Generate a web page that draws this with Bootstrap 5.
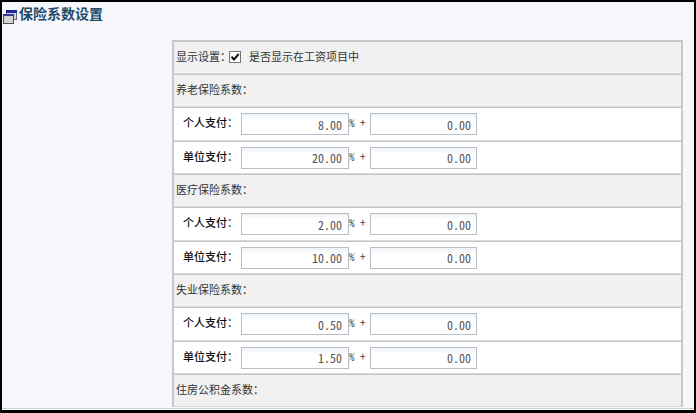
<!DOCTYPE html>
<html lang="zh-CN">
<head>
<meta charset="utf-8">
<meta name="viewport" content="width=device-width, initial-scale=1">
<title>保险系数设置</title>
<link href="https://cdn.jsdelivr.net/npm/bootstrap@5.3.0/dist/css/bootstrap.min.css" rel="stylesheet">
<style>
body { font: 11px/16px "Noto Sans CJK SC", sans-serif; color: #333; background: #fff; }
.frame { border: 2px solid #000; border-bottom-width: 3px; }
.panel { background: #f5f7fa; border-bottom: 1px solid #ccc; margin-bottom: 1px; padding-bottom: 1px; }
.page-title { font-size: 14px; line-height: 22px; font-weight: 700; color: #1f4a68; margin-bottom: 16px; }
.page-title svg { margin-top: 6px; }
.sheet { padding: 0 11px 0 170px; }
.coef { border: 1px solid #c6c8c9; border-width: 1px 2px 0; border-collapse: separate; border-spacing: 0; }
.coef th, .coef td { height: 33px; padding: 0 0 3px 2px; font-weight: 400; vertical-align: middle; border-top: 1px solid #c3c5c6; border-bottom: 1px solid #d9dbdb; background: #f1f1f1; }
.coef .entry td { background: #fff; padding: 0 0 0 9px; }
.coef .personal td { height: 34px; }
.entry label { width: 58px; color: #111; margin-bottom: 4px; font-weight: 500; }
.num { width: 108px; height: 22px; padding: 0 6px 0 4px; border: 1px solid #b9bec4; border-radius: 0; background: linear-gradient(#eef3f8, #fff 6px); text-align: right; color: #555; }
.extra { width: 107px; padding-right: 5px; }
.num, .join { font-family: "Noto Sans CJK SC", sans-serif; font-size: 12px; font-feature-settings: "hwid"; line-height: 16px; }
.join { width: 21px; color: #444; font-size: 11px; margin-bottom: 4px; }
.shown { width: 53px; }
.tick { appearance: none; width: 12px; height: 12px; margin: 2px 0 0; border: 1px solid #777; background: #fff; }
.tick:checked { background: #fff url("data:image/svg+xml,%3Csvg xmlns='http://www.w3.org/2000/svg' viewBox='0 0 10 10'%3E%3Cpath d='M1.5 4.8 4 7.5 8.7 2' fill='none' stroke='%23111' stroke-width='2'/%3E%3C/svg%3E"); }
</style>
<script src="https://cdn.jsdelivr.net/npm/bootstrap@5.3.0/dist/js/bootstrap.bundle.min.js"></script>
</head>
<body>
<main class="frame">
<div class="panel">
<h1 class="page-title d-flex">
<svg class="flex-shrink-0" width="17" height="16" viewBox="0 0 17 16" aria-hidden="true">
<rect x="4.500" y="2.500" width="10" height="9" fill="#d5d4dc" stroke="#66677f"/>
<path d="M4 3.500h11" stroke="#2425a0" stroke-width="3"/>
<rect x="1.500" y="6.500" width="10" height="9" fill="#d5d2d2" stroke="#4a4b60"/>
<path d="M1 7h11" stroke="#3637a0" stroke-width="2"/>
</svg><span>保险系数设置</span></h1>
<form class="sheet">
<table class="coef w-100">
<tbody>
<tr><td><div class="d-flex align-items-center"><span class="shown text-nowrap">显示设置：</span><input class="tick" type="checkbox" id="show" checked><label for="show" class="ps-2">是否显示在工资项目中</label></div></td></tr>
<tr><th scope="rowgroup">养老保险系数：</th></tr>
<tr class="entry personal"><td><div class="d-flex align-items-center"><label for="a1">个人支付：</label><input class="num" id="a1" value="8.00"><span class="join">% +</span><input class="num extra" aria-label="养老个人附加" value="0.00"></div></td></tr>
<tr class="entry"><td><div class="d-flex align-items-center"><label for="a2">单位支付：</label><input class="num" id="a2" value="20.00"><span class="join">% +</span><input class="num extra" aria-label="养老单位附加" value="0.00"></div></td></tr>
</tbody>
<tbody>
<tr><th scope="rowgroup">医疗保险系数：</th></tr>
<tr class="entry personal"><td><div class="d-flex align-items-center"><label for="b1">个人支付：</label><input class="num" id="b1" value="2.00"><span class="join">% +</span><input class="num extra" aria-label="医疗个人附加" value="0.00"></div></td></tr>
<tr class="entry"><td><div class="d-flex align-items-center"><label for="b2">单位支付：</label><input class="num" id="b2" value="10.00"><span class="join">% +</span><input class="num extra" aria-label="医疗单位附加" value="0.00"></div></td></tr>
</tbody>
<tbody>
<tr><th scope="rowgroup">失业保险系数：</th></tr>
<tr class="entry personal"><td><div class="d-flex align-items-center"><label for="c1">个人支付：</label><input class="num" id="c1" value="0.50"><span class="join">% +</span><input class="num extra" aria-label="失业个人附加" value="0.00"></div></td></tr>
<tr class="entry"><td><div class="d-flex align-items-center"><label for="c2">单位支付：</label><input class="num" id="c2" value="1.50"><span class="join">% +</span><input class="num extra" aria-label="失业单位附加" value="0.00"></div></td></tr>
</tbody>
<tbody>
<tr><th scope="rowgroup">住房公积金系数：</th></tr>
</tbody>
</table>
</form>
</div>
</main>
</body>
</html>
